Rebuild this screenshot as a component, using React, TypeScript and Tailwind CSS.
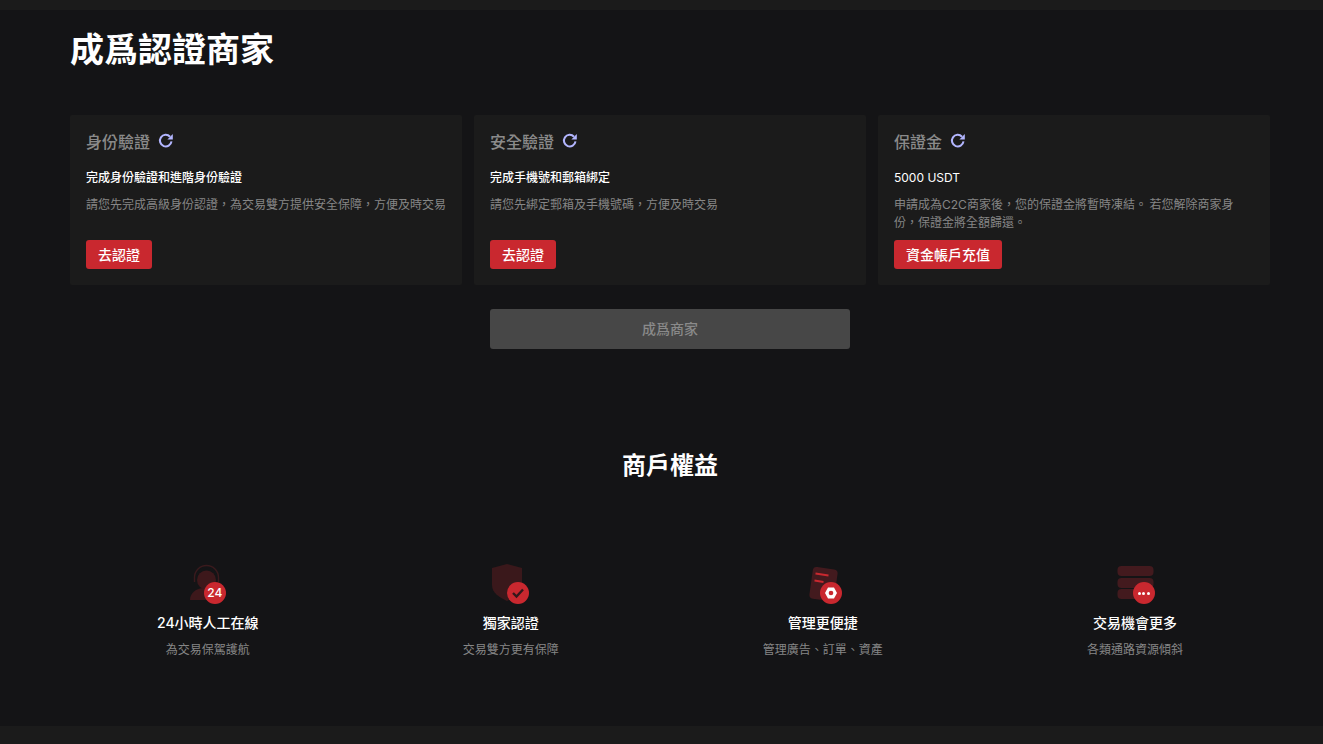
const latin = "font-['Inter',sans-serif]";

function Badge({ left = 17, children }: { left?: number; children: React.ReactNode }) {
  return (
    <span
      style={{ left }}
      className="absolute top-[18px] flex h-[22px] w-[22px] items-center justify-center rounded-full bg-[#c9282f] font-['Inter',sans-serif] text-[12px] font-medium text-white"
    >
      {children}
    </span>
  );
}

function SupportIcon() {
  return (
    <div className="relative h-[40px] w-[40px]">
      <svg width="40" height="40" viewBox="0 0 40 40" fill="none">
        <circle cx="18.5" cy="16" r="9.5" fill="#3d181b" />
        <path d="M6.5 18v-4.500a12 12 0 0 1 24 0v4.500" stroke="#3a1a1d" strokeWidth="1.4" />
        <path d="M2 36c0-7 6-12 14-12s12 5 12 12z" fill="#3d181b" />
      </svg>
      <Badge left={16}>24</Badge>
    </div>
  );
}

function ShieldIcon() {
  return (
    <div className="relative h-[40px] w-[40px]">
      <svg width="40" height="40" viewBox="0 0 40 40" fill="none">
        <path d="M1 4 16 0l15 4v17c0 8-7 12-15 16C8 33 1 29 1 21z" fill="#3a181b" />
      </svg>
      <Badge left={16}>
        <svg width="14" height="12" viewBox="0 0 14 12" fill="none">
          <path d="m2 6 3.500 3.500L12 2.500" stroke="#33181b" strokeWidth="2.400" />
        </svg>
      </Badge>
    </div>
  );
}

function ManageIcon() {
  return (
    <div className="relative h-[40px] w-[40px]">
      <svg width="40" height="40" viewBox="0 0 40 40" fill="none">
        <rect x="8" y="4" width="25" height="32" rx="4" transform="rotate(8 20 20)" fill="#431a1e" />
        <path d="M12.500 9.500l13 2M11.500 16.500l9 1.500" stroke="#c9282f" strokeWidth="1.800" />
      </svg>
      <Badge>
        <svg width="14" height="14" viewBox="0 0 14 14" fill="none">
          <path d="M4 1.500h6L13 7l-3 5.500H4L1 7z" fill="white" />
          <circle cx="7" cy="7" r="2.300" fill="#c9282f" />
        </svg>
      </Badge>
    </div>
  );
}

function MoreIcon() {
  return (
    <div className="relative h-[40px] w-[40px]">
      <svg width="40" height="40" viewBox="0 0 40 40" fill="none">
        <rect x="2.500" y="2" width="36" height="10" rx="4" fill="#431a1e" />
        <rect x="2.500" y="14" width="36" height="10" rx="4" fill="#431a1e" />
        <rect x="2.500" y="25" width="36" height="10" rx="4" fill="#431a1e" />
      </svg>
      <Badge left={18}>
        <span className="flex gap-[1.500px]">
          <i className="h-[3px] w-[3px] rounded-full bg-white" />
          <i className="h-[3px] w-[3px] rounded-full bg-white" />
          <i className="h-[3px] w-[3px] rounded-full bg-white" />
        </span>
      </Badge>
    </div>
  );
}

function Refresh() {
  return (
    <svg width="16" height="16" viewBox="0 0 16 16" fill="none" className="mb-[1px]">
      <path d="M13.500 8.400A5.800 5.800 0 1 1 12 3.700" stroke="#b3b6ff" strokeWidth="2" />
      <path d="M14.800 1v5.400h-5.400z" fill="#b3b6ff" />
    </svg>
  );
}

const cards = [
  {
    title: "身份驗證",
    sub: "完成身份驗證和進階身份驗證",
    desc: "請您先完成高級身份認證，為交易雙方提供安全保障，方便及時交易",
    action: "去認證",
  },
  {
    title: "安全驗證",
    sub: "完成手機號和郵箱綁定",
    desc: "請您先綁定郵箱及手機號碼，方便及時交易",
    action: "去認證",
  },
  {
    title: "保證金",
    sub: <span className={`${latin} font-normal leading-none`}>5000 USDT</span>,
    desc: (
      <>
        申請成為<span className={`${latin} leading-none`}>C2C</span>商家後，您的保證金將暫時凍結。 若您解除商家身{"\n"}份，保證金將全額歸還。
      </>
    ),
    action: "資金帳戶充值",
  },
];

const perks = [
  {
    icon: <SupportIcon />,
    title: (
      <>
        <span className={`${latin} leading-none`}>24</span>小時人工在線
      </>
    ),
    desc: "為交易保駕護航",
  },
  { icon: <ShieldIcon />, title: "獨家認證", desc: "交易雙方更有保障" },
  { icon: <ManageIcon />, title: "管理更便捷", desc: "管理廣告、訂單、資產" },
  { icon: <MoreIcon />, title: "交易機會更多", desc: "各類通路資源傾斜" },
];

export default function App() {
  return (
    <div lang="zh-TW" className="flex min-h-[744px] flex-col bg-[#141416] font-['Noto_Sans_CJK_TC','Inter',sans-serif] text-white">
      <div className="h-[10px] bg-[#1b1b1b]" />
      <main className="ml-[70px] w-[1200px] flex-1">
        <h1 className="mt-[15px] text-[34px] font-bold leading-[46px]">成爲認證商家</h1>

        <div className="mt-[44px] grid grid-cols-3 gap-3">
          {cards.map((card) => (
            <div key={card.title} className="flex h-[170px] flex-col rounded-[2px] bg-[#1b1b1b] px-4 pb-4 pt-[13px]">
              <div className="flex items-center gap-2">
                <h3 className="text-[16px] font-medium leading-[27px] text-[#8a8a8a]">{card.title}</h3>
                <Refresh />
              </div>
              <p className="mt-[13px] text-[12px] font-medium leading-[18px]">{card.sub}</p>
              <p className="mt-[9px] whitespace-pre-line text-[12px] leading-[18px] text-[#868686]">{card.desc}</p>
              <button className="mt-auto h-[29px] self-start rounded-[3px] bg-[#c9282f] px-3 text-[14px] font-medium leading-[29px] text-white">
                {card.action}
              </button>
            </div>
          ))}
        </div>

        <div className="mt-6 flex justify-center">
          <button className="h-10 w-[360px] rounded-[3px] bg-[#474747] pb-[2px] text-[14px] font-medium text-[#8a8a8a]">
            成爲商家
          </button>
        </div>

        <h2 className="mt-[98px] text-center text-[24px] font-bold leading-[34px]">商戶權益</h2>

        <div className="mt-[83px] flex justify-between px-[87px]">
          {perks.map((perk) => (
            <div key={perk.desc} className="flex flex-col items-center">
              {perk.icon}
              <h4 className="mt-[8px] text-[14px] font-medium leading-[20px]">{perk.title}</h4>
              <p className="mt-[8px] text-[12px] leading-[18px] text-[#868686]">{perk.desc}</p>
            </div>
          ))}
        </div>
      </main>
      <div className="h-[18px] bg-[#1b1b1b]" />
    </div>
  );
}
